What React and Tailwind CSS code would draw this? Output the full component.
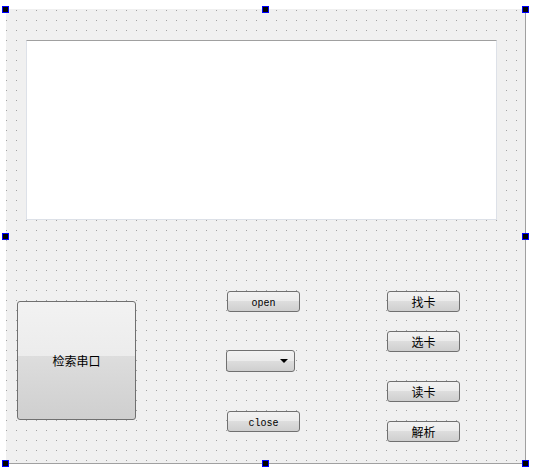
import React from 'react';

const btn =
  'flex items-center justify-center border border-[#707070] rounded-[3px] bg-[linear-gradient(to_bottom,#f2f2f2_0%,#ebebeb_48%,#dddddd_50%,#cfcfcf_100%)] text-black';

const Handle = ({ cls }) => (
  <div className={`absolute w-[7px] h-[7px] bg-black border border-[#0000ff] ${cls}`} />
);

const SmallButton = ({ label, mono, cls = '' }) => (
  <div
    className={`${btn} w-[73px] h-[21px] ${cls} ${
      mono ? "font-['Liberation_Mono',monospace] text-[10px] pt-[3px]" : "font-['Noto_Sans_CJK_SC',sans-serif] text-[12px] pt-px"
    }`}
  >
    {label}
  </div>
);

const App = () => {
  return (
    <div className="relative w-[536px] h-[469px] bg-white overflow-hidden">
      {/* form */}
      <div className="relative ml-[6px] mt-[9px] w-[520px] h-[455px] bg-[#f0f0f0] border-r border-b border-[#a0a0a0]">
        {/* designer dot grid */}
        <svg className="absolute inset-0" width="519" height="454">
          <defs>
            <pattern id="grid" width="10" height="10" patternUnits="userSpaceOnUse">
              <rect x="0" y="1" width="1" height="1" fill="#a3a3a3" />
            </pattern>
          </defs>
          <rect x="0" y="0" width="519" height="454" fill="url(#grid)" />
        </svg>

        <div className="relative flex flex-col">
          {/* text edit */}
          <div className="ml-[20px] mt-[31px] w-[471px] h-[180px] bg-white border border-[#dde1e8] border-t-[#a0a0a0]" />

          {/* controls */}
          <div className="flex mt-[71px]">
            <div
              className={`${btn} ml-[11px] mt-[10px] w-[119px] h-[119px] bg-[linear-gradient(to_bottom,#f2f2f2_0%,#ececec_46%,#dddddd_46%,#cfcfcf_100%)] font-['Noto_Sans_CJK_SC',sans-serif] text-[12px]`}
            >
              检索串口
            </div>

            <div className="flex flex-col ml-[91px]">
              <SmallButton label="open" mono />
              <div className={`${btn} -ml-px mt-[38px] w-[69px] h-[22px] justify-end pr-[6px]`}>
                <div className="w-0 h-0 border-l-[4px] border-r-[4px] border-t-[4px] border-l-transparent border-r-transparent border-t-black" />
              </div>
              <SmallButton label="close" mono cls="mt-[39px]" />
            </div>

            <div className="flex flex-col ml-[87px]">
              <SmallButton label="找卡" />
              <SmallButton label="选卡" cls="mt-[19px]" />
              <SmallButton label="读卡" cls="mt-[29px]" />
              <SmallButton label="解析" cls="mt-[19px]" />
            </div>
          </div>
        </div>
      </div>

      {/* selection handles */}
      <Handle cls="left-[2px] top-[6px]" />
      <Handle cls="left-[262px] top-[6px]" />
      <Handle cls="left-[522px] top-[6px]" />
      <Handle cls="left-[2px] top-[233px]" />
      <Handle cls="left-[522px] top-[233px]" />
      <Handle cls="left-[2px] top-[460px]" />
      <Handle cls="left-[262px] top-[460px]" />
      <Handle cls="left-[522px] top-[460px]" />
    </div>
  );
};

export default App;
